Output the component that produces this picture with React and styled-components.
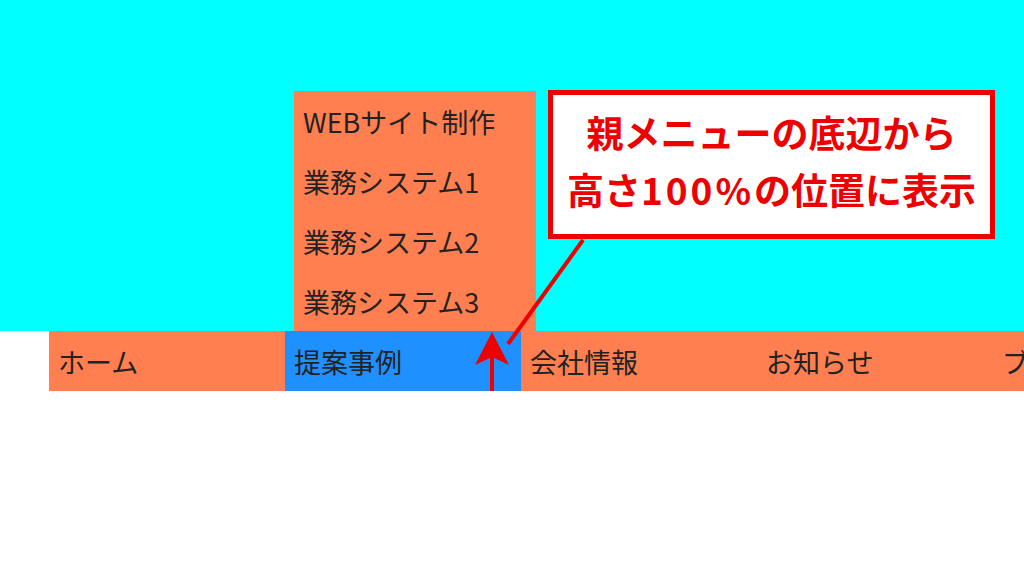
import React from "react";
import styled, { createGlobalStyle } from "styled-components";

const Global = createGlobalStyle`
  html, body { margin: 0; padding: 0; background: #fff; }
  body {
    width: 1024px; height: 576px; overflow: hidden;
    font-family: "Noto Sans CJK JP", "Noto Sans", sans-serif;
  }
`;

const Page = styled.div`
  position: relative;
  width: 1024px;
  height: 576px;
  overflow: hidden;
  background: #fff;
`;

const Hero = styled.div`
  height: 331px;
  background: #00ffff;
`;

const Nav = styled.ul`
  display: flex;
  margin: 0 0 0 49px;
  padding: 0;
  list-style: none;
  width: max-content;
`;

const NavItem = styled.li`
  position: relative;
  flex: 0 0 236px;
  height: 60px;
  display: flex;
  align-items: center;
  padding-left: 9px;
  box-sizing: border-box;
  background: ${(p) => (p.$active ? "#1e90ff" : "#ff7f50")};
  color: #222;
  font-size: 27px;
  white-space: nowrap;
`;

const SubMenu = styled.ul`
  position: absolute;
  left: 9px;
  bottom: 100%;
  width: 242px;
  margin: 0;
  padding: 0;
  list-style: none;
  background: #ff7f50;
`;

const SubItem = styled.li`
  height: 60px;
  display: flex;
  align-items: center;
  padding-left: 9px;
  color: #222;
  font-size: 27px;
  white-space: nowrap;
`;

const Callout = styled.div`
  position: absolute;
  left: 548px;
  top: 90px;
  width: 447px;
  height: 149px;
  box-sizing: border-box;
  padding-bottom: 8px;
  border: 5px solid #ee0000;
  background: #fff;
  display: flex;
  flex-direction: column;
  align-items: center;
  justify-content: center;
  color: #ee0000;
  font-weight: 700;
  font-size: 37px;
  line-height: 57px;
  white-space: nowrap;
`;

const Digits = styled.span`
  letter-spacing: 3px;
`;

const Overlay = styled.svg`
  position: absolute;
  left: 0;
  top: 0;
  pointer-events: none;
`;

const subItems = ["WEBサイト制作", "業務システム1", "業務システム2", "業務システム3"];
const navItems = ["ホーム", "提案事例", "会社情報", "お知らせ", "ブログ"];

export default function App() {
  return (
    <Page>
      <Global />
      <Hero />
      <Nav>
        {navItems.map((label) => (
          <NavItem key={label} $active={label === "提案事例"}>
            {label}
            {label === "提案事例" && (
              <SubMenu>
                {subItems.map((s) => (
                  <SubItem key={s}>{s}</SubItem>
                ))}
              </SubMenu>
            )}
          </NavItem>
        ))}
      </Nav>
      <Callout>
        <div>親メニューの底辺から</div>
        <div>
          高さ<Digits>100%</Digits>の位置に表示
        </div>
      </Callout>
      <Overlay width="1024" height="576" viewBox="0 0 1024 576">
        <line x1="492" y1="391" x2="492" y2="356" stroke="#ee0000" strokeWidth="4" />
        <polygon points="492,332 509,365 492,357 475,365" fill="#ee0000" />
        <line x1="583" y1="240" x2="508" y2="344" stroke="#ee0000" strokeWidth="4" />
      </Overlay>
    </Page>
  );
}
